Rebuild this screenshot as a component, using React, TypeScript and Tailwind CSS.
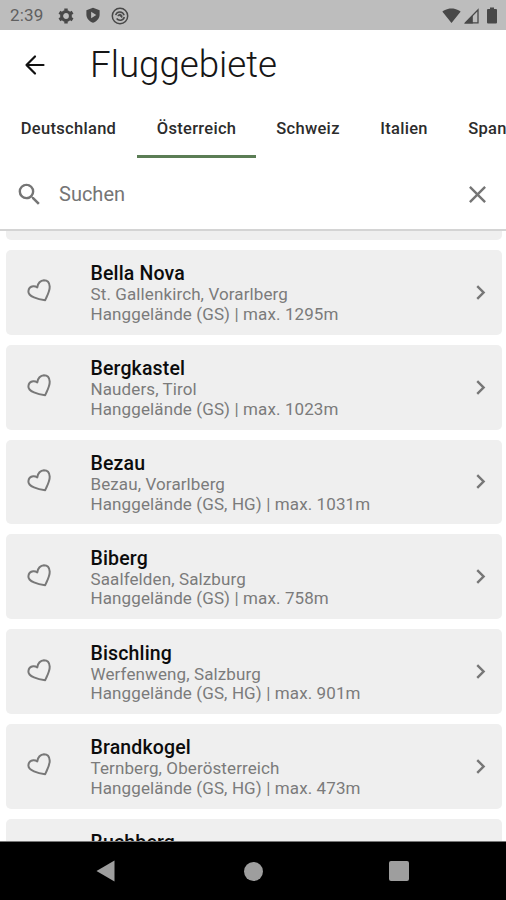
import React from 'react';
import { MdSearch, MdClose, MdChevronRight, MdSignalWifi4Bar } from 'react-icons/md';

interface Site {
  name: string;
  place: string;
  info: string;
}

const TABS = [
  { label: 'Deutschland', width: 'w-[137px]' },
  { label: 'Österreich', width: 'w-[119px]' },
  { label: 'Schweiz', width: 'w-[104px]' },
  { label: 'Italien', width: 'w-[88px]' },
  { label: 'Spanien', width: 'w-[102px]' },
];

const SITES: Site[] = [
  { name: 'Bella Nova', place: 'St. Gallenkirch, Vorarlberg', info: 'Hanggelände (GS) | max. 1295m' },
  { name: 'Bergkastel', place: 'Nauders, Tirol', info: 'Hanggelände (GS) | max. 1023m' },
  { name: 'Bezau', place: 'Bezau, Vorarlberg', info: 'Hanggelände (GS, HG) | max. 1031m' },
  { name: 'Biberg', place: 'Saalfelden, Salzburg', info: 'Hanggelände (GS) | max. 758m' },
  { name: 'Bischling', place: 'Werfenweng, Salzburg', info: 'Hanggelände (GS, HG) | max. 901m' },
  { name: 'Brandkogel', place: 'Ternberg, Oberösterreich', info: 'Hanggelände (GS, HG) | max. 473m' },
  { name: 'Buchberg', place: '', info: '' },
];

function StatusBar() {
  return (
    <div className="flex h-[30px] shrink-0 items-center bg-[#bdbdbd] pl-[10px] pr-[9px] pt-px text-[#484848]">
      <span className="w-[48px] text-[17px] leading-none tracking-[0.2px] text-[#606060]">2:39</span>
      <svg width="16" height="16" viewBox="0 0 16 16" fill="none" stroke="currentColor">
        <circle cx="8" cy="8" r="4.4" strokeWidth="3" />
        <path d="M8 .4v2.400M8 13.200v2.400M1.400 4.200l2.100 1.200M12.500 10.600l2.100 1.200M1.400 11.800l2.100-1.200M12.500 5.400l2.100-1.200" strokeWidth="3.400" />
      </svg>
      <svg className="ml-[11px]" width="16" height="17" viewBox="0 0 16 18">
        <path d="M8 .8 15 3.4V8c0 4.2-2.9 7.3-7 8.8C3.9 15.300 1 12.200 1 8V3.400z" fill="currentColor" />
        <path d="m6 5 5.500 3.500L6 12z" fill="#bdbdbd" />
      </svg>
      <svg className="ml-[10px]" width="18" height="18" viewBox="0 0 18 18" fill="none" stroke="currentColor">
        <circle cx="9" cy="9" r="7.700" strokeWidth="1.500" />
        <path d="M4.700 8.200C5.600 4.200 11.800 3.700 13.100 8.300M13.300 10c-.8 3.700-5.600 4.300-7.700 1.500" strokeWidth="1.500" />
        <path d="M6.800 8.800c.8-2 3.500-2 4.200 0v1.700L8.800 8.600z" fill="currentColor" strokeWidth="1" />
      </svg>
      <MdSignalWifi4Bar size={19} className="ml-auto" />
      <svg className="ml-[3px]" width="15" height="16" viewBox="0 0 15 16">
        <path d="M1.500 14.800 14 1.800v13z" fill="none" stroke="currentColor" strokeWidth="1.300" />
        <path d="M.5 15.400 8.800 7v8.400z" fill="currentColor" />
      </svg>
      <svg className="ml-[8px]" width="10" height="17" viewBox="0 0 10 17">
        <path d="M3 .5h4V2h2a1 1 0 0 1 1 1v12.500a1 1 0 0 1-1 1H1a1 1 0 0 1-1-1V3a1 1 0 0 1 1-1h2z" fill="currentColor" />
      </svg>
    </div>
  );
}

function Heart() {
  return (
    <svg width="26" height="26" viewBox="0 0 26 26" fill="none" stroke="#787878" strokeWidth="2" strokeLinejoin="round">
      <path d="M19.200 22.200C15.500 21.800 11.500 21 8 19.400C4.500 17.900 2.200 16 2.400 13.200C2.600 10.500 4.600 8.500 7.200 8.200C8.800 8.100 10.200 8.500 11.300 9.400C11.700 5.200 14.600 2.300 17.900 2.200C21.300 2.200 23.500 4.800 23.700 8.600C23.900 13.400 20.800 18.200 19.200 22.200z" />
    </svg>
  );
}

function SiteCard({ site }: { site: Site }) {
  return (
    <div className="flex h-[84.800px] shrink-0 items-center rounded-[5px] bg-[#efefef] pl-5 pr-[7px]">
      <div className="w-[64.500px] pb-[2px]">
        <Heart />
      </div>
      <div className="h-[64px] flex-1 whitespace-nowrap pt-[2px] text-[17px] leading-[19.700px] tracking-[0.110px] text-[#7b7b7b]">
        <h2 className="text-[19.500px] font-medium leading-[23px] tracking-[0.150px] text-[#0c0c0c]">{site.name}</h2>
        <p>{site.place}</p>
        <p>{site.info}</p>
      </div>
      <MdChevronRight size={29} className="text-[#777777]" />
    </div>
  );
}

export default function App() {
  return (
    <div className="flex h-[900px] w-[506px] flex-col overflow-hidden bg-white font-['Roboto',sans-serif]">
      <StatusBar />

      <header className="flex h-[68px] shrink-0 items-center pl-6">
        <svg className="mt-px" width="22" height="22" viewBox="0 0 22 22" fill="none" stroke="#111111" strokeWidth="2.200" strokeLinecap="round" strokeLinejoin="round">
          <path d="M19.500 11H2.500M11 2.500 2.500 11l8.500 8.500" />
        </svg>
        <h1 className="ml-[44px] pt-[3px] text-[36.700px] font-light leading-none text-[#161616]">Fluggebiete</h1>
      </header>

      {/* Country tabs */}
      <nav className="flex h-[60px] shrink-0">
        {TABS.map((tab) => (
          <div
            key={tab.label}
            className={`${tab.width} flex shrink-0 items-center justify-center border-b-[3px] pt-[5px] text-[16.500px] font-medium tracking-[0.300px] text-[#2c2c2c] ${
              tab.label === 'Österreich' ? 'border-[#5b7d55]' : 'border-transparent'
            }`}
          >
            {tab.label}
          </div>
        ))}
      </nav>

      <div className="flex h-[73px] shrink-0 items-center border-b-2 border-[#d4d4d4] pl-[15px] pr-[14px] pt-px text-[#757575]">
        <MdSearch size={29} />
        <span className="ml-[15px] flex-1 text-[20px]">Suchen</span>
        <MdClose size={29} />
      </div>

      {/* Site list, scrolled down a little */}
      <main className="flex min-h-0 flex-1 flex-col gap-[10px] overflow-hidden pl-[6px] pr-1">
        <div className="h-[9px] shrink-0 rounded-b-[5px] bg-[#efefef]" />
        {SITES.map((site) => (
          <SiteCard key={site.name} site={site} />
        ))}
      </main>

      <div className="flex h-[59px] shrink-0 items-center border-t border-[#777777] bg-black pl-[96px]">
        <svg width="19" height="22" viewBox="0 0 19 22">
          <path d="M18.500.5v21L.5 11z" fill="#9e9e9e" />
        </svg>
        <div className="ml-[129px] size-[19px] rounded-full bg-[#9e9e9e]" />
        <div className="ml-[126px] size-[20px] rounded-[2px] bg-[#9e9e9e]" />
      </div>
    </div>
  );
}
